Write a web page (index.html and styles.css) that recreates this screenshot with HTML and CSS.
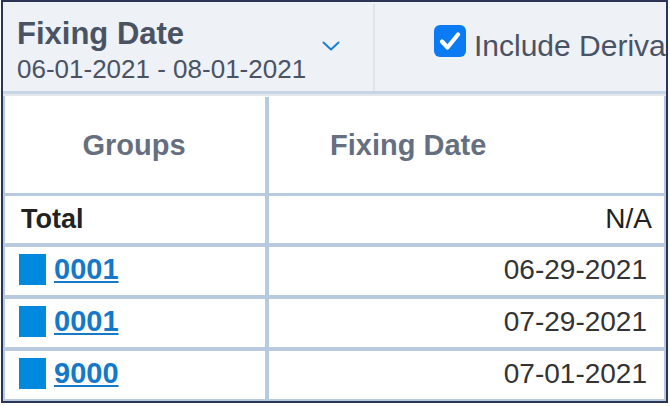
FILE: index.html
```html
<!DOCTYPE html>
<html>
<head>
<meta charset="utf-8">
<link rel="stylesheet" href="styles.css">
</head>
<body>
<div class="frame">
  <div class="toolbar">
    <div class="dropdown">
      <div class="dd-text">
        <div class="dd-title">Fixing Date</div>
        <div class="dd-sub">06-01-2021 - 08-01-2021</div>
      </div>
      <svg class="chevron" width="18" height="10" viewBox="0 0 18 10"><polyline points="1.5,1.5 9,8.5 16.5,1.5" fill="none" stroke="#1a7fd4" stroke-width="2" stroke-linecap="round" stroke-linejoin="round"/></svg>
    </div>
    <div class="tb-sep"></div>
    <div class="option">
      <span class="checkbox"><svg width="32" height="32" viewBox="0 0 32 32"><polyline points="8,16.5 13.5,22.5 24,9.5" fill="none" stroke="#fff" stroke-width="4.2" stroke-linecap="round" stroke-linejoin="round"/></svg></span>
      <span class="opt-label">Include Derivatives</span>
    </div>
  </div>
  <div class="toolbar-edge"></div>
  <div class="grid">
    <div class="cell head c1">Groups</div>
    <div class="cell head c2">Fixing Date</div>

    <div class="cell total c1">Total</div>
    <div class="cell total c2 num">N/A</div>

    <div class="cell row c1"><span class="swatch"></span><a class="link" href="#">0001</a></div>
    <div class="cell row c2 num date">06-29-2021</div>

    <div class="cell row c1"><span class="swatch"></span><a class="link" href="#">0001</a></div>
    <div class="cell row c2 num date">07-29-2021</div>

    <div class="cell row last c1"><span class="swatch"></span><a class="link" href="#">9000</a></div>
    <div class="cell row last c2 num date">07-01-2021</div>
  </div>
</div>
</body>
</html>
```

FILE: styles.css
```css
html, body {
  margin: 0;
  padding: 0;
  background: #ffffff;
}

body {
  font-family: "Liberation Sans", Arial, sans-serif;
}

.frame {
  box-sizing: border-box;
  width: 667px;
  height: 403px;
  margin-left: 1px;
  border: 2px solid #2a3555;
  display: flex;
  flex-direction: column;
  overflow: hidden;
  background: #ffffff;
}

.toolbar {
  height: 89px;
  flex: none;
  display: flex;
  background: #eef1f6;
  border-bottom: 3px solid #c7d6e7;
}

.dropdown {
  width: 370px;
  flex: none;
  display: flex;
  align-items: center;
  box-sizing: border-box;
  padding-left: 14px;
  padding-right: 33px;
}

.dd-text {
  flex: 1;
  align-self: flex-start;
  padding-top: 14px;
}

.dd-title {
  font-size: 31px;
  line-height: 35px;
  font-weight: bold;
  color: #4a5364;
}

.dd-sub {
  margin-top: 3px;
  font-size: 26px;
  line-height: 30px;
  color: #4a5364;
}

.chevron {
  flex: none;
  display: block;
  margin-top: -1px;
}

.tb-sep {
  width: 2px;
  flex: none;
  margin: 2px 0 0;
  background: #dfe3e9;
}

.option {
  flex: none;
  display: flex;
  align-items: flex-start;
  padding-left: 59px;
  padding-top: 23px;
  white-space: nowrap;
}

.checkbox {
  width: 32px;
  height: 32px;
  border-radius: 6px;
  background: #0b7bf4;
  display: block;
  flex: none;
}

.checkbox svg {
  display: block;
}

.opt-label {
  margin-left: 8px;
  margin-top: 4px;
  font-size: 30px;
  line-height: 34px;
  color: #4a5364;
}

.toolbar-edge {
  height: 2px;
  flex: none;
  background: #e3e6ea;
}

.grid {
  flex: 1;
  display: grid;
  grid-template-columns: 264px 1fr;
  grid-template-rows: 100px 51px 52px 52px 48px;
  border-left: 2px solid #b8cadd;
  border-right: 2px solid #b8cadd;
  border-bottom: 2px solid #b8cadd;
  box-sizing: border-box;
}

.cell {
  display: flex;
  align-items: center;
  box-sizing: border-box;
  border-bottom: 4px solid #b8cadd;
  min-width: 0;
}

.c1 {
  border-right: 4px solid #b8cadd;
}

.head {
  border-bottom-width: 3px;
  font-size: 29px;
  font-weight: bold;
  color: #666f7f;
  margin-top: 1px;
}

.head.c1 {
  justify-content: center;
  padding-right: 2px;
}

.head.c2 {
  padding-left: 61px;
}

.total {
  font-size: 27px;
  color: #222222;
  padding-bottom: 1px;
}

.total.c1 {
  font-weight: bold;
  padding-left: 16px;
}

.total.c2 {
  font-size: 28px;
}

.num {
  justify-content: flex-end;
  padding-right: 12px;
}

.row {
  padding-bottom: 3px;
}

.row.last {
  border-bottom: none;
}

.row.c1 {
  padding-left: 14px;
}

.swatch {
  width: 27px;
  height: 31px;
  background: #0189dd;
  flex: none;
  margin-right: 8px;
}

.link {
  font-size: 29px;
  font-weight: bold;
  color: #1479c9;
  text-decoration: underline;
  text-decoration-thickness: 2px;
  text-underline-offset: 2px;
}

.date {
  font-size: 28px;
  color: #333333;
  padding-right: 17px;
}
```
